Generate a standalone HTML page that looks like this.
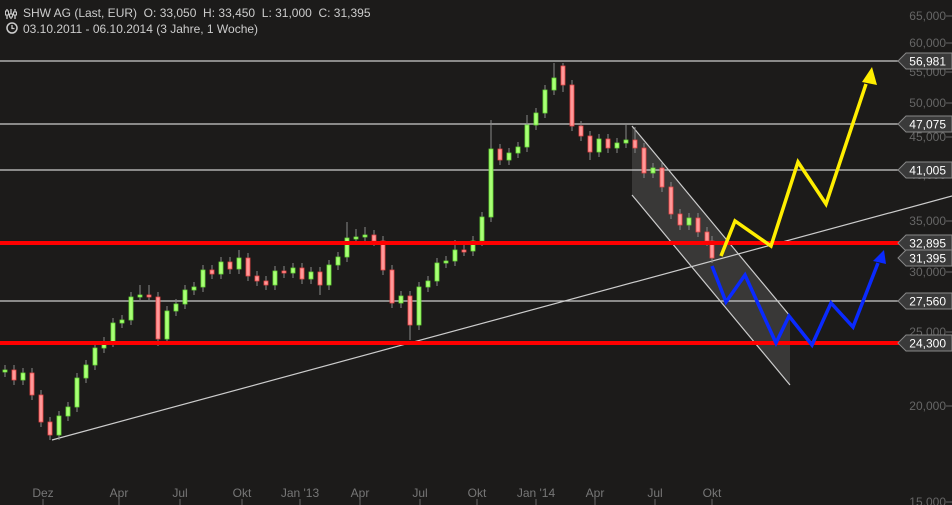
<!DOCTYPE html>
<html><head><meta charset="utf-8"><style>
html,body{margin:0;padding:0;background:#1c1b1a;overflow:hidden}
svg{display:block}
text{font-family:"Liberation Sans",sans-serif}
</style></head><body>
<svg width="952" height="505" viewBox="0 0 952 505" xmlns="http://www.w3.org/2000/svg">
<rect width="952" height="505" fill="#1c1b1a"/>
<g fill="#666" font-size="12" text-anchor="end">
<text x="946" y="20">65,000</text><text x="946" y="47">60,000</text><text x="946" y="76">55,000</text>
<text x="946" y="107">50,000</text><text x="946" y="141">45,000</text><text x="946" y="179">40,000</text>
<text x="946" y="225">35,000</text><text x="946" y="276">30,000</text><text x="946" y="336">25,000</text>
<text x="946" y="410">20,000</text><text x="946" y="506">15,000</text>
</g>
<g stroke="#666" stroke-width="1">
<path d="M946 16h6M946 43h6M946 72h6M946 103h6M946 137h6M946 175h6M946 221h6M946 272h6M946 332h6M946 406h6M946 502h6"/>
<path d="M43 499v6M119 499v6M180 499v6M242 499v6M300 499v6M360 499v6M420 499v6M477 499v6M536 499v6M595 499v6M655 499v6M712 499v6"/>
</g>
<g fill="#777" font-size="12" text-anchor="middle">
<text x="43" y="497">Dez</text><text x="119" y="497">Apr</text><text x="180" y="497">Jul</text><text x="242" y="497">Okt</text>
<text x="300" y="497">Jan '13</text><text x="360" y="497">Apr</text><text x="420" y="497">Jul</text><text x="477" y="497">Okt</text>
<text x="536" y="497">Jan '14</text><text x="595" y="497">Apr</text><text x="655" y="497">Jul</text><text x="712" y="497">Okt</text>
</g>
<polygon points="632,126 790,316 790,385 632,195" fill="rgba(255,255,255,0.13)"/>
<g stroke="#ccc" stroke-width="1.2" fill="none">
<path d="M0 61H900M0 124H900M0 170H900M0 301H900"/>
<path d="M632 126L790 316M632 195L790 385"/>
<path d="M52 440L952 196"/>
</g>
<path stroke="#888" stroke-width="1" fill="none" d="M5 365V377M14 365V385M23 368V385M32 368V400M41 390V427M50 417V440M59 411V440M68 402V421M77 373V412M86 360V383M95 343V370M104 337V353M113 318V347M122 315V328M131 292V325M140 285V302M149 285V302M158 292V346M167 306V344M176 299V316M185 285V309M194 282V295M203 265V292M212 265V279M221 257V279M230 257V274M239 250V274M248 253V281M257 271V286M266 276V290M275 266V290M284 266V278M293 263V278M302 263V284M311 267V284M320 267V295M329 260V290M338 252V270M347 222V262M356 229V244M365 227V242M374 230V246M383 236V275M392 265V308M401 291V308M410 291V340M419 282V330M428 276V292M437 258V286M446 256V268M455 240V266M464 245V256M473 236V256M482 212V246M491 120V222M500 144V165M509 148V165M518 142V158M527 115V152M536 108V130M545 85V118M554 63V95M563 63V92M572 80V131M581 121V141M590 131V160M599 134V157M608 134V153M617 138V153M626 125V148M635 127V153M644 143V178M653 163V178M662 163V192M671 182V219M680 209V230M689 213V230M698 213V237M707 227V246M712 236V263"/>
<path fill="#aaff77" stroke="#66dd33" stroke-width="0.8" d="M3 370h4v2h-4zM21 373h4v7h-4zM57 416h4v19h-4zM66 407h4v9h-4zM75 378h4v29h-4zM84 365h4v13h-4zM93 348h4v17h-4zM102 342h4v6h-4zM111 323h4v19h-4zM120 320h4v3h-4zM129 297h4v23h-4zM138 295h4v2h-4zM165 311h4v28h-4zM174 304h4v7h-4zM183 290h4v14h-4zM192 287h4v3h-4zM201 270h4v17h-4zM219 262h4v12h-4zM237 258h4v11h-4zM273 271h4v14h-4zM291 268h4v5h-4zM309 272h4v7h-4zM327 265h4v20h-4zM336 257h4v8h-4zM345 238h4v19h-4zM354 237h4v2h-4zM363 235h4v2h-4zM399 296h4v7h-4zM417 287h4v38h-4zM426 281h4v6h-4zM435 263h4v18h-4zM444 261h4v2h-4zM453 250h4v11h-4zM471 241h4v10h-4zM480 217h4v24h-4zM489 149h4v68h-4zM507 153h4v7h-4zM516 147h4v6h-4zM525 125h4v22h-4zM534 113h4v12h-4zM543 90h4v23h-4zM552 78h4v12h-4zM597 139h4v13h-4zM615 143h4v5h-4zM624 140h4v3h-4zM651 168h4v5h-4zM687 218h4v7h-4z"/>
<path fill="#ff9999" stroke="#ee4444" stroke-width="0.8" d="M12 370h4v10h-4zM30 373h4v22h-4zM39 395h4v27h-4zM48 422h4v13h-4zM147 295h4v2h-4zM156 297h4v42h-4zM210 270h4v4h-4zM228 262h4v7h-4zM246 258h4v18h-4zM255 276h4v5h-4zM264 281h4v4h-4zM282 271h4v2h-4zM300 268h4v11h-4zM318 272h4v13h-4zM372 235h4v6h-4zM381 241h4v29h-4zM390 270h4v33h-4zM408 296h4v29h-4zM462 250h4v2h-4zM498 149h4v11h-4zM561 66h4v19h-4zM570 85h4v41h-4zM579 126h4v10h-4zM588 136h4v16h-4zM606 139h4v9h-4zM633 140h4v8h-4zM642 148h4v25h-4zM660 168h4v19h-4zM669 187h4v27h-4zM678 214h4v11h-4zM696 218h4v14h-4zM705 232h4v9h-4zM710 241h4v17h-4z"/>
<g stroke="#ff0000" stroke-width="4"><path d="M0 243H952M0 343H952"/></g>
<polyline points="721,256 735,221 771,246 798,162 826,204 866,84" fill="none" stroke="#ffee00" stroke-width="3.5"/>
<polygon points="872,67 862,82 877,85" fill="#ffee00"/>
<polyline points="712,266 726,302 745,275 776,343 789,316 812,345 831,303 853,327 878,263" fill="none" stroke="#0a2aff" stroke-width="3.5"/>
<polygon points="884,250 873,261 886,264" fill="#0a2aff"/>
<g stroke="#888" stroke-width="1" fill="#3a3a3a">
<polygon points="898,61 906,53 952,53 952,69 906,69"/>
<polygon points="898,124 906,116 952,116 952,132 906,132"/>
<polygon points="898,170 906,162 952,162 952,178 906,178"/>
<polygon points="898,243 906,235 952,235 952,251 906,251"/>
<polygon points="898,258 906,250 952,250 952,266 906,266"/>
<polygon points="898,301 906,293 952,293 952,309 906,309"/>
<polygon points="898,343 906,335 952,335 952,351 906,351"/>
</g>
<g font-size="12" fill="#fff" text-anchor="end">
<text x="946" y="65.5">56,981</text><text x="946" y="128.5">47,075</text><text x="946" y="174.5">41,005</text>
<text x="946" y="247.5">32,895</text><text x="946" y="262.5">31,395</text><text x="946" y="305.5">27,560</text><text x="946" y="347.5">24,300</text>
</g>
<g fill="#ccc" font-size="12">
<g stroke="#ccc" stroke-width="1.3"><path d="M7 9v10M11 9v10M15 9v10"/></g>
<rect x="5.5" y="11" width="3" height="4" fill="#1c1b1a" stroke="#ccc"/><rect x="9.5" y="14" width="3" height="3" fill="#1c1b1a" stroke="#ccc"/><rect x="13.5" y="12" width="3" height="3" fill="#1c1b1a" stroke="#ccc"/>
<text x="23" y="17" xml:space="preserve">SHW AG (Last, EUR)  O: 33,050  H: 33,450  L: 31,000  C: 31,395</text>
<circle cx="12" cy="28" r="5" fill="none" stroke="#ccc" stroke-width="1.5"/><path d="M12 25v3.5h2.5" stroke="#ccc" stroke-width="1.3" fill="none"/>
<text x="23" y="33">03.10.2011 - 06.10.2014 (3 Jahre, 1 Woche)</text>
</g>
</svg>
</body></html>
